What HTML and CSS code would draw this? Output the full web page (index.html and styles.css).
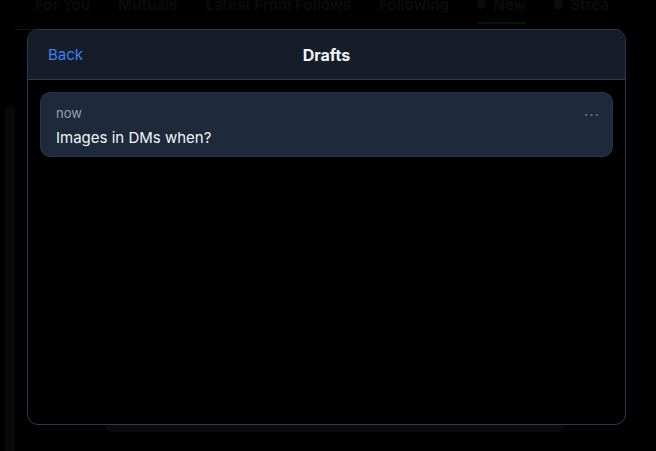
FILE: index.html
```html
<!DOCTYPE html>
<html lang="en">
<head>
    <meta charset="UTF-8">
    <meta name="viewport" content="width=device-width, initial-scale=1.0">
    <title>Drafts</title>
    <link rel="stylesheet" href="styles.css">
</head>
<body>
    <div class="page">
        <nav class="tabs">
            <span class="tab">For You</span>
            <span class="tab">Mutuals</span>
            <span class="tab">Latest From Follows</span>
            <span class="tab">Following</span>
            <span class="tab active"><i class="dot"></i>New</span>
            <span class="tab"><i class="dot"></i>Strea</span>
        </nav>
        <div class="feed">
            <div class="rail"></div>
            <div class="post-bar"></div>
        </div>
    </div>

    <div class="modal">
        <header class="modal-header">
            <a class="back" href="#">Back</a>
            <h1>Drafts</h1>
            <span class="spacer"></span>
        </header>
        <div class="modal-body">
            <div class="draft">
                <div class="draft-top">
                    <span class="time">now</span>
                    <span class="more">&middot;&middot;&middot;</span>
                </div>
                <p class="draft-text">Images in DMs when?</p>
            </div>
        </div>
    </div>
</body>
</html>
```

FILE: styles.css
```css
* {
    box-sizing: border-box;
}
body {
    margin: 0;
    background: #000;
    font-family: Inter, "Noto Sans", sans-serif;
    height: 451px;
    overflow: hidden;
}
.tabs {
    display: flex;
    gap: 28px;
    height: 37px;
    margin: -7px 36px 0 15px;
    padding-left: 20px;
    border-bottom: 1px solid #14171b;
    white-space: nowrap;
    overflow: hidden;
}
.tab {
    font-size: 15px;
    font-weight: 700;
    color: #0b0b0b;
    display: flex;
    align-items: flex-start;
    gap: 8px;
    padding-top: 2px;
}
.tab.active {
    border-bottom: 2px solid #07111a;
    height: 31px;
}
.dot {
    width: 8px;
    height: 10px;
    background: #120903;
    border-radius: 3px;
    margin-top: 4px;
}
.feed {
    display: flex;
    align-items: flex-start;
    height: 414px;
}
.rail {
    width: 10px;
    height: 345px;
    margin: 76px 0 0 5px;
    background: #090909;
    border-radius: 5px 5px 0 0;
}
.post-bar {
    margin: 395px 0 0 90px;
    width: 460px;
    height: 7px;
    background: #0a0a0a;
    border-radius: 0 0 6px 6px;
}

.modal {
    position: absolute;
    left: 27px;
    top: 29px;
    width: 599px;
    height: 396px;
    background: #000;
    border: 1px solid #2c3a4e;
    border-radius: 11px;
    overflow: hidden;
    display: flex;
    flex-direction: column;
}
.modal-header {
    height: 50px;
    background: #161d28;
    border-bottom: 1px solid #2c3a4e;
    display: flex;
    align-items: center;
    justify-content: space-between;
    padding: 0 20px;
}
.back {
    color: #3b82f6;
    font-size: 15px;
    text-decoration: none;
    width: 60px;
}
.modal-header h1 {
    margin: 0;
    font-size: 16px;
    font-weight: 700;
    color: #f1f5f9;
}
.spacer {
    width: 60px;
}
.modal-body {
    padding: 12px;
}
.draft {
    background: #1e293b;
    border: 1px solid #283548;
    border-radius: 10px;
    height: 65px;
    padding: 8px 15px;
}
.draft-top {
    display: flex;
    justify-content: space-between;
    align-items: center;
}
.time {
    font-size: 13px;
    color: #94a3b8;
}
.more {
    color: #64748b;
    font-size: 15px;
    letter-spacing: 1px;
    margin-right: -3px;
    margin-top: 4px;
}
.draft-text {
    margin: 4px 0 0;
    font-size: 15px;
    color: #f1f5f9;
}
```
